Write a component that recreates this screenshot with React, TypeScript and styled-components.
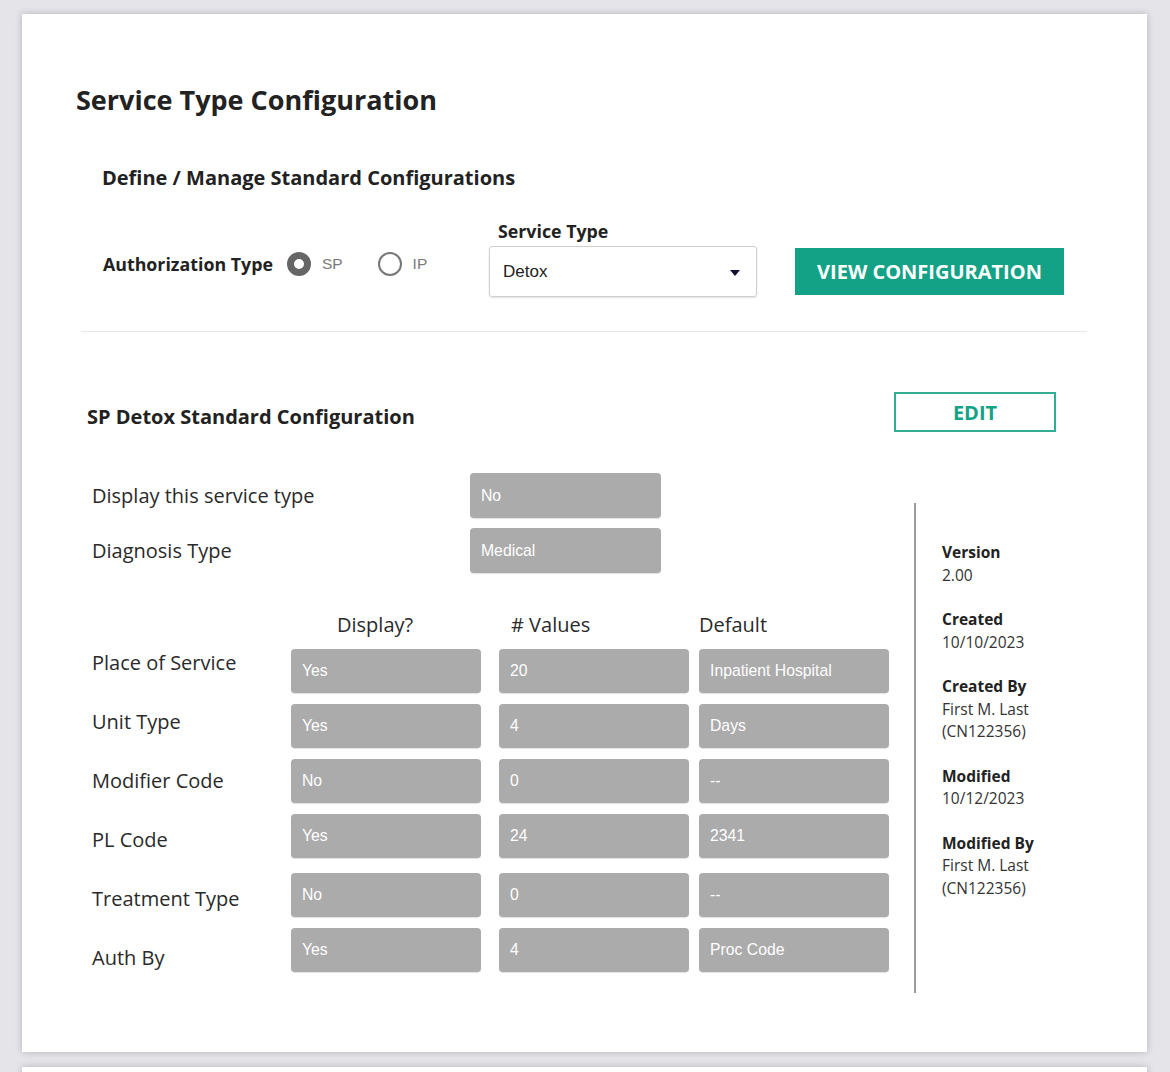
import * as React from "react";
import styled, { createGlobalStyle } from "styled-components";

const GlobalStyle = createGlobalStyle`
  html, body {
    margin: 0;
    height: 1072px;
    overflow: hidden;
    background: #e5e4e9;
  }
  body {
    font-family: "Open Sans", "Liberation Sans", sans-serif;
    color: #222;
  }
`;

const Page = styled.div`
  display: flex;
  flex-direction: column;
  gap: 15px;
  padding: 14px 23px 0 22px;
`;

const Card = styled.div`
  background: #fff;
  box-shadow: 0 0 7px rgba(0, 0, 0, 0.22);
  padding: 66px 60px 59px 54px;
`;

const NextCard = styled.div`
  background: #fff;
  box-shadow: 0 0 7px rgba(0, 0, 0, 0.22);
  height: 120px;
`;

const Title = styled.h1`
  margin: 0;
  font-size: 27px;
  line-height: 40px;
  font-weight: 700;
  color: #222;
`;

const SubTitle = styled.h2`
  margin: 44px 0 0 26px;
  font-size: 20px;
  line-height: 28px;
  font-weight: 700;
  color: #222;
`;

const ControlsRow = styled.div`
  display: flex;
  align-items: flex-end;
  margin: 28px 0 0 27px;
`;

const AuthGroup = styled.div`
  display: flex;
  align-items: center;
  height: 26px;
  margin-bottom: 20px;
  width: 386px;
`;

const FieldLabel = styled.span`
  font-size: 17.8px;
  font-weight: 700;
  color: #222;
  margin-right: 14px;
`;

const RadioOption = styled.label`
  display: flex;
  align-items: center;
  gap: 11px;
  margin-right: 35px;
  font-family: "Liberation Sans", Arial, sans-serif;
  font-size: 15.5px;
  color: #7a7a7a;
`;

const RadioCircle = styled.span<{ $checked?: boolean }>`
  box-sizing: border-box;
  width: 24px;
  height: 24px;
  border-radius: 50%;
  border: ${(p) => (p.$checked ? "7px solid #666" : "2px solid #777")};
  background: #fff;
`;

const ServiceField = styled.div`
  display: flex;
  flex-direction: column;
  gap: 4px;
`;

const ServiceLabel = styled.span`
  font-size: 17.8px;
  font-weight: 700;
  line-height: 22px;
  padding-left: 9px;
  color: #222;
`;

const Select = styled.div`
  box-sizing: border-box;
  width: 268px;
  height: 51px;
  border: 1px solid #cfcfcf;
  border-radius: 3px;
  box-shadow: 0 1px 2px rgba(0, 0, 0, 0.12);
  display: flex;
  align-items: center;
  justify-content: space-between;
  padding: 0 16px 0 13px;
  font-family: "Liberation Sans", Arial, sans-serif;
  font-size: 17px;
  color: #222;
`;

const Caret = styled.span`
  width: 0;
  height: 0;
  border-left: 5px solid transparent;
  border-right: 5px solid transparent;
  border-top: 6px solid #101030;
  margin-top: 2px;
`;

const PrimaryButton = styled.button`
  width: 269px;
  height: 47px;
  margin: 0 0 2px 38px;
  border: none;
  background: #13a285;
  color: #fff;
  font-family: "Open Sans", sans-serif;
  font-size: 20px;
  font-weight: 700;
  cursor: pointer;
`;

const Divider = styled.hr`
  margin: 34px 0 0 5px;
  border: none;
  border-top: 1px solid #e6e6e6;
`;

const SectionHeader = styled.div`
  display: flex;
  align-items: center;
  justify-content: space-between;
  margin: 60px 31px 0 11px;
`;

const SectionTitle = styled.h3`
  margin: 9px 0 0 0;
  font-size: 20px;
  font-weight: 700;
  color: #222;
`;

const OutlineButton = styled.button`
  box-sizing: border-box;
  width: 162px;
  height: 40px;
  border: 2px solid #2fae94;
  background: #fff;
  color: #13a285;
  font-family: "Open Sans", sans-serif;
  font-size: 20px;
  font-weight: 700;
  cursor: pointer;
`;

const Body = styled.div`
  display: flex;
  margin: 41px 0 0 16px;
`;

const LeftColumn = styled.div`
  display: flex;
  flex-direction: column;
`;

const SimpleRow = styled.div`
  display: flex;
  align-items: center;
  margin-bottom: 10px;
`;

const RowLabel = styled.span`
  width: 378px;
  font-size: 20px;
  color: #2a2a2a;
`;

const ValueBox = styled.div<{ $width?: number; $height?: number; $shift?: boolean }>`
  box-sizing: border-box;
  width: ${(p) => p.$width ?? 190}px;
  height: ${(p) => p.$height ?? 44}px;
  margin-top: ${(p) => (p.$shift ? 4 : 0)}px;
  background: #ababab;
  border-radius: 4px;
  box-shadow: 0 1px 1px rgba(0, 0, 0, 0.12);
  display: flex;
  align-items: center;
  padding-left: 11px;
  font-family: "Liberation Sans", Arial, sans-serif;
  font-size: 15.75px;
  color: #fff;
`;

const Table = styled.div`
  display: flex;
  align-items: flex-start;
  margin-top: 29px;
`;

const LabelColumn = styled.div`
  width: 199px;
  padding-top: 21px;
  display: flex;
  flex-direction: column;
`;

const TableLabel = styled.span`
  height: 59px;
  display: flex;
  align-items: center;
  font-size: 20px;
  color: #2a2a2a;
`;

const BoxGrid = styled.div`
  display: grid;
  grid-template-columns: 208px 200px 190px;
  align-content: start;
  row-gap: 11px;
`;

const ColumnHead = styled.span<{ $indent: number }>`
  line-height: 26px;
  padding-left: ${(p) => p.$indent}px;
  font-size: 20px;
  color: #2a2a2a;
`;

const MetaColumn = styled.div`
  box-sizing: border-box;
  margin: 30px 0 0 25px;
  height: 490px;
  border-left: 2px solid #9a9a9a;
  padding: 38px 0 0 26px;
  display: flex;
  flex-direction: column;
  gap: 22px;
`;

const MetaGroup = styled.div`
  display: flex;
  flex-direction: column;
  font-size: 15.5px;
  line-height: 22.5px;
  color: #333;
`;

const MetaTitle = styled.span`
  font-weight: 700;
  color: #222;
`;

const rows = [
  { label: "Place of Service", values: ["Yes", "20", "Inpatient Hospital"] },
  { label: "Unit Type", values: ["Yes", "4", "Days"] },
  { label: "Modifier Code", values: ["No", "0", "--"] },
  { label: "PL Code", values: ["Yes", "24", "2341"] },
  { label: "Treatment Type", values: ["No", "0", "--"], shift: true },
  { label: "Auth By", values: ["Yes", "4", "Proc Code"] },
];

const meta = [
  { title: "Version", lines: ["2.00"] },
  { title: "Created", lines: ["10/10/2023"] },
  { title: "Created By", lines: ["First M. Last", "(CN122356)"] },
  { title: "Modified", lines: ["10/12/2023"] },
  { title: "Modified By", lines: ["First M. Last", "(CN122356)"] },
];

export default function App() {
  return (
    <>
      <GlobalStyle />
      <Page>
        <Card>
          <Title>Service Type Configuration</Title>
          <SubTitle>Define / Manage Standard Configurations</SubTitle>

          <ControlsRow>
            <AuthGroup>
              <FieldLabel>Authorization Type</FieldLabel>
              <RadioOption>
                <RadioCircle $checked />
                SP
              </RadioOption>
              <RadioOption>
                <RadioCircle />
                IP
              </RadioOption>
            </AuthGroup>
            <ServiceField>
              <ServiceLabel>Service Type</ServiceLabel>
              <Select>
                Detox
                <Caret />
              </Select>
            </ServiceField>
            <PrimaryButton>VIEW CONFIGURATION</PrimaryButton>
          </ControlsRow>

          <Divider />

          <SectionHeader>
            <SectionTitle>SP Detox Standard Configuration</SectionTitle>
            <OutlineButton>EDIT</OutlineButton>
          </SectionHeader>

          <Body>
            <LeftColumn>
              <SimpleRow>
                <RowLabel>Display this service type</RowLabel>
                <ValueBox $width={191} $height={45}>No</ValueBox>
              </SimpleRow>
              <SimpleRow>
                <RowLabel>Diagnosis Type</RowLabel>
                <ValueBox $width={191} $height={45}>Medical</ValueBox>
              </SimpleRow>

              <Table>
                <LabelColumn>
                  {rows.map((r) => (
                    <TableLabel key={r.label}>{r.label}</TableLabel>
                  ))}
                </LabelColumn>
                <BoxGrid>
                  <ColumnHead $indent={46}>Display?</ColumnHead>
                  <ColumnHead $indent={12}># Values</ColumnHead>
                  <ColumnHead $indent={0}>Default</ColumnHead>
                  {rows.map((r) =>
                    r.values.map((v, i) => (
                      <ValueBox key={r.label + i} $shift={r.shift}>
                        {v}
                      </ValueBox>
                    ))
                  )}
                </BoxGrid>
              </Table>
            </LeftColumn>

            <MetaColumn>
              {meta.map((m) => (
                <MetaGroup key={m.title}>
                  <MetaTitle>{m.title}</MetaTitle>
                  {m.lines.map((l) => (
                    <span key={l}>{l}</span>
                  ))}
                </MetaGroup>
              ))}
            </MetaColumn>
          </Body>
        </Card>
        <NextCard />
      </Page>
    </>
  );
}
